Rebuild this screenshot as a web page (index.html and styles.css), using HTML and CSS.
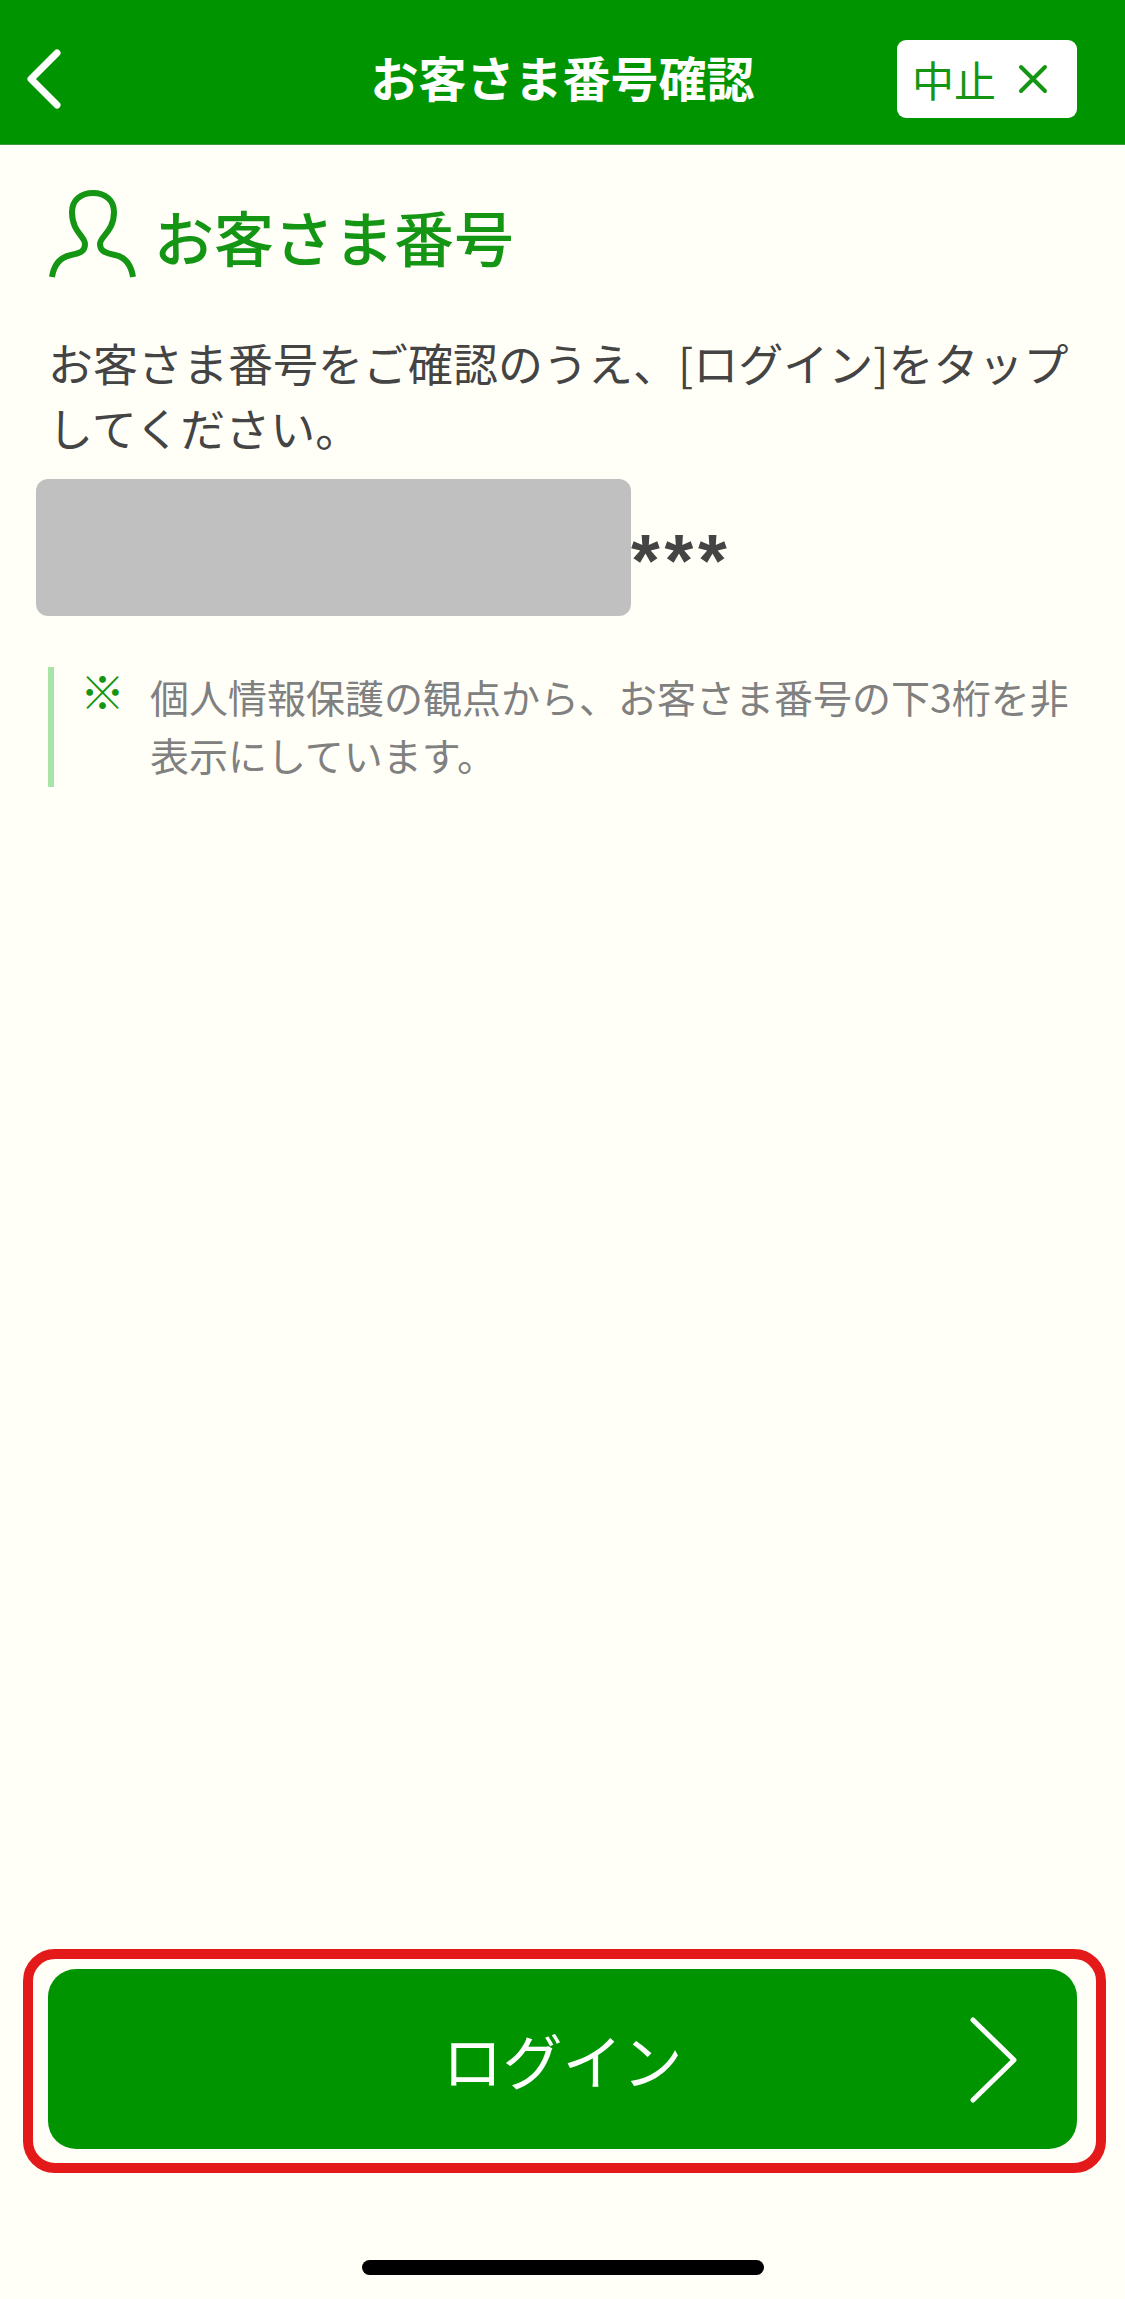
FILE: index.html
```html
<!DOCTYPE html>
<html lang="ja">
<head>
<meta charset="utf-8">
<title>お客さま番号確認</title>
<link rel="stylesheet" href="styles.css">
</head>
<body>
<header class="topbar">
  <a class="back" aria-label="戻る">
    <svg class="back-icon" viewBox="0 0 40 64"><path d="M32 6 L6 32 L32 58"/></svg>
  </a>
  <h1 class="topbar-title">お客さま番号確認</h1>
  <div class="topbar-right">
    <button class="cancel">
      <span>中止</span>
      <svg class="cancel-icon" viewBox="0 0 30 30"><path d="M3 3 L27 27 M27 3 L3 27"/></svg>
    </button>
  </div>
</header>
<main class="content">
  <section class="section-head">
    <svg class="person-icon" viewBox="0 0 88 90"><path d="M3 88 C5 75 12 68 22 66 C32 64 36 62 36 55 C36 47 23 43 23 23 C23 11 32 4 44 4 C56 4 65 11 65 23 C65 43 51 47 51 55 C51 62 56 64 66 66 C76 68 82 75 84 88"/></svg>
    <h2 class="section-title">お客さま番号</h2>
  </section>
  <p class="lead">お客さま番号をご確認のうえ、[ログイン]をタップ<br>してください。</p>
  <div class="number-row">
    <div class="mask"></div>
    <span class="stars">***</span>
  </div>
  <aside class="note">
    <span class="note-mark">※</span>
    <p class="note-text">個人情報保護の観点から、お客さま番号の下3桁を非表示にしています。</p>
  </aside>
</main>
<footer class="footer">
  <div class="login-wrap">
    <button class="login">
      <span>ログイン</span>
      <svg class="login-icon" viewBox="0 0 50 88"><path d="M4 4 L45 44 L4 84"/></svg>
    </button>
    <div class="highlight"></div>
  </div>
  <div class="home-bar"></div>
</footer>
</body>
</html>
```
FILE: styles.css
```css
* { box-sizing: border-box; }
html, body { margin: 0; padding: 0; }
body {
  min-height: 100vh;
  display: flex;
  flex-direction: column;
  background: #fffff8;
  font-family: "Noto Sans CJK JP", "Noto Sans", sans-serif;
  color: #444444;
}
.topbar {
  height: 145px;
  padding-top: 13px;
  background: #009500;
  border-bottom: 1px solid #3c9a3c;
  display: grid;
  grid-template-columns: 1fr auto 1fr;
  align-items: center;
  flex: none;
}
.back { display: block; padding-left: 25px; height: 64px; }
.back-icon {
  width: 40px;
  height: 64px;
  display: block;
  fill: none;
  stroke: #ffffff;
  stroke-width: 7;
  stroke-linecap: round;
  stroke-linejoin: round;
}
.topbar-title {
  margin: 0 0 5px;
  font-size: 48px;
  font-weight: 700;
  line-height: 60px;
  color: #ffffff;
}
.topbar-right { display: flex; justify-content: flex-end; padding-right: 48px; }
.cancel {
  width: 180px;
  height: 78px;
  border: 0;
  border-radius: 9px;
  background: #ffffff;
  color: #149614;
  font: 400 42px/1 "Noto Sans CJK JP", sans-serif;
  display: flex;
  align-items: center;
  padding: 0 0 0 15px;
  gap: 22px;
}
.cancel-icon {
  width: 30px;
  height: 30px;
  fill: none;
  stroke: #149614;
  stroke-width: 4;
  stroke-linecap: round;
}
.content { padding: 0 48px; flex: none; }
.section-head {
  display: flex;
  align-items: center;
  gap: 17px;
  margin-top: 44px;
  height: 90px;
}
.person-icon {
  width: 88px;
  height: 90px;
  flex: none;
  margin-left: 1px;
  fill: none;
  stroke: #149614;
  stroke-width: 6;
}
.section-title {
  margin: 3px 0 0;
  font-size: 60px;
  font-weight: 500;
  line-height: 70px;
  color: #149614;
}
.lead {
  margin: 51px 0 0;
  font-size: 45px;
  line-height: 65px;
  white-space: nowrap;
}
.number-row {
  display: flex;
  align-items: center;
  margin: 19px 0 0 -12px;
  height: 137px;
}
.mask {
  width: 595px;
  height: 137px;
  background: #c0c0c0;
  border-radius: 12px;
  flex: none;
}
.stars {
  font-family: "Liberation Sans", sans-serif;
  font-weight: 700;
  font-size: 74px;
  line-height: 1;
  letter-spacing: 4.7px;
  padding-top: 26px;
  color: #444444;
}
.note {
  margin-top: 51px;
  min-height: 120px;
  border-left: 6px solid #a8e4a8;
  display: flex;
  padding-left: 26px;
}
.note-mark {
  flex: none;
  width: 70px;
  font-size: 45px;
  line-height: 48px;
  color: #149614;
}
.note-text {
  margin: 0;
  font-size: 39px;
  line-height: 58px;
  color: #808080;
}
.footer {
  margin-top: auto;
  padding: 0 48px;
  flex: none;
}
.login-wrap { position: relative; }
.login {
  width: 100%;
  height: 180px;
  border: 0;
  border-radius: 28px;
  background: #009500;
  color: #ffffff;
  font: 400 60px/1 "Noto Sans CJK JP", sans-serif;
  display: flex;
  align-items: center;
  justify-content: center;
  position: relative;
}
.login-icon {
  position: absolute;
  right: 58px;
  top: 47px;
  width: 50px;
  height: 88px;
  fill: none;
  stroke: #ffffff;
  stroke-width: 5;
  stroke-linecap: round;
  stroke-linejoin: round;
}
.highlight {
  position: absolute;
  inset: -20px -29px -24px -25px;
  border: 10px solid #e3191a;
  border-radius: 32px;
  pointer-events: none;
}
.home-bar {
  width: 402px;
  height: 15px;
  background: #000000;
  border-radius: 8px;
  margin: 111px auto 24px;
}
```
